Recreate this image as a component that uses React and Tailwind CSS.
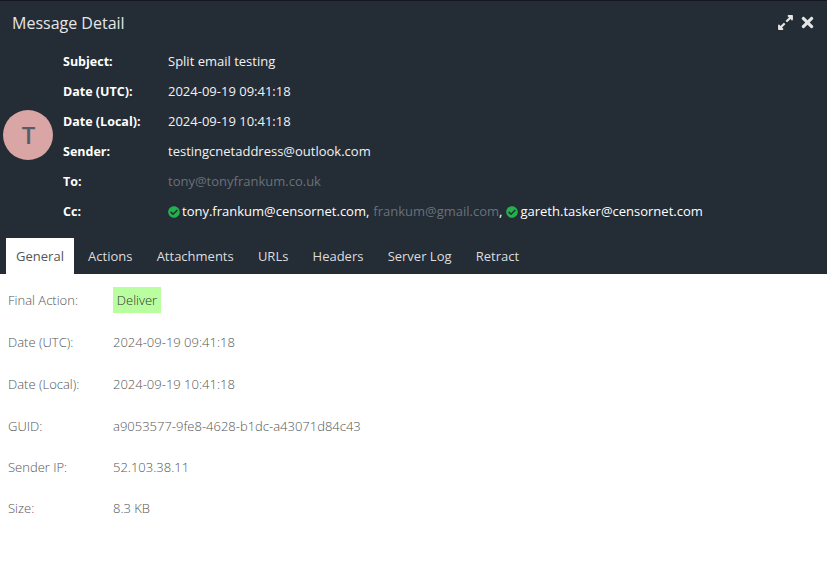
import { FaCheckCircle, FaExpandAlt, FaTimes } from "react-icons/fa";

const tabs = ["General", "Actions", "Attachments", "URLs", "Headers", "Server Log", "Retract"];

const details = [
  { label: "Date (UTC):", value: "2024-09-19 09:41:18", height: "h-[42px]" },
  { label: "Date (Local):", value: "2024-09-19 10:41:18", height: "h-[42px]" },
  { label: "GUID:", value: "a9053577-9fe8-4628-b1dc-a43071d84c43", height: "h-[42px]" },
  { label: "Sender IP:", value: "52.103.38.11", height: "h-[40px]" },
  { label: "Size:", value: "8.3 KB", height: "h-[42px]" },
];

const HeaderRow = ({ label, children }) => (
  <div className="flex h-[30px] items-center">
    <div className="w-[105px] text-[12.5px] font-bold text-white">{label}</div>
    <div className="flex items-center">{children}</div>
  </div>
);

const Verified = ({ children }) => (
  <span className="flex items-center text-white">
    <FaCheckCircle className="mr-[2px] text-[12px] text-[#22b14c]" />
    {children}
  </span>
);

const App = () => {
  return (
    <div className="h-[566px] w-[827px] overflow-hidden bg-white font-['Open_Sans',sans-serif] text-[13px]">
      {/* Header */}
      <div className="h-[274px] border-t border-[#15191f] bg-[#242c36] text-[#f2f2f2]">
        <div className="flex h-[46px] items-center justify-between pb-[3px] pl-3 pr-[11.5px]">
          <h1 className="text-[16px] font-normal text-[#e6e6e6]">Message Detail</h1>
          <div className="flex items-center gap-[4.5px] text-[#e4e4e4]">
            <FaExpandAlt className="text-[17px]" />
            <FaTimes className="text-[17px]" />
          </div>
        </div>

        <div className="flex">
          <div className="flex w-[63px] items-center pb-[4px] pl-[3px]">
            <div className="flex h-[50px] w-[50px] items-center justify-center rounded-full bg-[#d9a5a5] pl-[1px] text-[24px] font-semibold text-[#555e66]">
              T
            </div>
          </div>
          <div>
            <HeaderRow label="Subject:">Split email testing</HeaderRow>
            <HeaderRow label="Date (UTC):">2024-09-19 09:41:18</HeaderRow>
            <HeaderRow label="Date (Local):">2024-09-19 10:41:18</HeaderRow>
            <HeaderRow label="Sender:">testingcnetaddress@outlook.com</HeaderRow>
            <HeaderRow label="To:">
              <span className="text-[#6b7178]">tony@tonyfrankum.co.uk</span>
            </HeaderRow>
            <HeaderRow label="Cc:">
              <Verified>tony.frankum@censornet.com,</Verified>
              <span className="ml-[4px] text-[#6b7178]">frankum@gmail.com</span>
              <span className="mr-[4px] text-white">,</span>
              <Verified>gareth.tasker@censornet.com</Verified>
            </HeaderRow>
          </div>
        </div>

        {/* Tabs */}
        <div className="mt-[11px] flex h-[36px] pl-[6px] pt-[1px]">
          {tabs.map((tab, i) => (
            <div
              key={tab}
              className={
                i === 0
                  ? "mr-[2px] mt-[-1px] flex w-[68px] items-center justify-center bg-white pt-[1px] text-[#555]"
                  : "flex items-center px-[12.1px] text-[#dddddd]"
              }
            >
              {tab}
            </div>
          ))}
        </div>
      </div>

      {/* General tab */}
      <div className="pl-2 pt-[13px] font-light text-[#555]">
        <div className="flex h-[26px] items-center">
          <div className="w-[105px] pt-[2px]">Final Action:</div>
          <div className="flex h-[26px] w-[48px] items-center justify-center bg-[#b9ff9f] pt-[2px] text-[#333]">
            Deliver
          </div>
        </div>
        <div className="mt-[3px]">
          {details.map(({ label, value, height }) => (
            <div key={label} className={`flex items-center pt-[12px] ${height}`}>
              <div className="w-[105px]">{label}</div>
              <div>{value}</div>
            </div>
          ))}
        </div>
      </div>
    </div>
  );
};

export default App;
